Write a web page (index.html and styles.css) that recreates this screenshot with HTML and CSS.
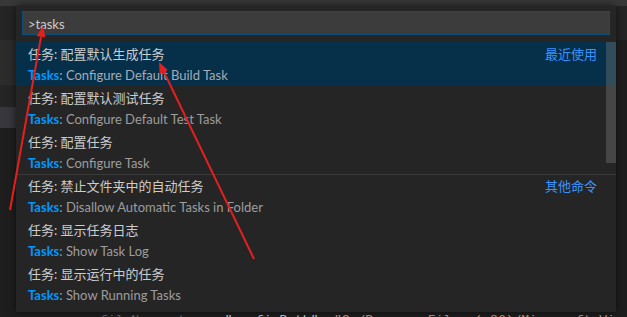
FILE: index.html
```html
<!DOCTYPE html>
<html lang="zh-CN">
<head>
<meta charset="utf-8">
<link rel="stylesheet" href="styles.css">
</head>
<body>
<div class="screen">
  <div class="topbar"></div>
  <div class="main">
    <div class="leftstrip">
      <div class="ls ls-a"></div>
      <div class="ls ls-b"></div>
      <div class="ls ls-c"></div>
      <div class="ls ls-d"></div>
    </div>
    <div class="panel">
      <div class="inputbox">&gt;tasks</div>
      <div class="list">
        <div class="row selected">
          <div class="line1"><span class="label">任务: 配置默认生成任务</span><span class="tag">最近使用</span></div>
          <div class="line2"><span class="hl">Tasks</span>: Configure Default Build Task</div>
        </div>
        <div class="row">
          <div class="line1"><span class="label">任务: 配置默认测试任务</span></div>
          <div class="line2"><span class="hl">Tasks</span>: Configure Default Test Task</div>
        </div>
        <div class="row">
          <div class="line1"><span class="label">任务: 配置任务</span></div>
          <div class="line2"><span class="hl">Tasks</span>: Configure Task</div>
        </div>
        <div class="row sep">
          <div class="line1"><span class="label">任务: 禁止文件夹中的自动任务</span><span class="tag">其他命令</span></div>
          <div class="line2"><span class="hl">Tasks</span>: Disallow Automatic Tasks in Folder</div>
        </div>
        <div class="row">
          <div class="line1"><span class="label">任务: 显示任务日志</span></div>
          <div class="line2"><span class="hl">Tasks</span>: Show Task Log</div>
        </div>
        <div class="row">
          <div class="line1"><span class="label">任务: 显示运行中的任务</span></div>
          <div class="line2"><span class="hl">Tasks</span>: Show Running Tasks</div>
        </div>
        <div class="scrollbar"></div>
      </div>
    </div>
    <div class="rightstrip"></div>
  </div>
  <div class="codeline"><span class="c-dim">fileName: true, </span><span class="c-key">"configPath"</span><span class="c-punc">: </span><span class="c-str">"C:/Program Files (x86)/Microsoft Vi</span></div>
  <svg class="arrows" width="627" height="317" viewBox="0 0 627 317">
    <line x1="10" y1="210" x2="41" y2="37" />
    <polygon points="43,26 45.5,37.6 36.6,36" />
    <line x1="254" y1="259" x2="164" y2="72" />
    <polygon points="159,62 167.9,69.9 159.7,73.9" />
  </svg>
</div>
</body>
</html>
```

FILE: styles.css
```css
html, body {
  margin: 0;
  padding: 0;
  background: #1e1e1e;
}
.screen {
  position: relative;
  width: 627px;
  height: 317px;
  overflow: hidden;
  background: #1e1e1e;
  font-family: Lato, "Noto Sans CJK SC", sans-serif;
  font-size: 13px;
}
.topbar {
  height: 6px;
  background: #383838;
}
.main {
  display: flex;
  height: 306px;
}
.leftstrip {
  width: 16px;
  display: flex;
  flex-direction: column;
}
.ls-a { height: 34px; background: #252526; }
.ls-b { height: 45px; background: #2c2c2d; }
.ls-c { height: 22px; background: #252526; }
.ls-d { height: 21px; background: #37373d; }
.panel {
  width: 600px;
  background: #252526;
  padding: 5px 0 6px 0;
  box-sizing: border-box;
  display: flex;
  flex-direction: column;
  box-shadow: 0 0 8px rgba(0,0,0,0.6);
  position: relative;
  z-index: 1;
}
.inputbox {
  margin: 0 6px 0 6px;
  height: 24px;
  box-sizing: border-box;
  background: #3c3c3c;
  border: 1px solid #0e4f7a;
  color: #cccccc;
  padding: 3px 0 0 5px;
  line-height: 19px;
  font-size: 13px;
}
.list {
  margin-top: 7px;
  position: relative;
  display: flex;
  flex-direction: column;
}
.row {
  height: 44px;
  box-sizing: border-box;
  padding: 0 19px 0 12px;
  display: flex;
  flex-direction: column;
}
.row.selected {
  background: #062f4a;
}
.row.sep {
  border-top: 1px solid #3a3a3a;
}
.line1 {
  height: 22px;
  display: flex;
  align-items: center;
  justify-content: space-between;
  color: #cccccc;
}
.line2 {
  height: 22px;
  display: flex;
  align-items: center;
  color: #9d9d9d;
  font-size: 13px;
  white-space: pre;
}
.selected .line2 {
  color: #a4acb4;
}
.hl {
  color: #0097fb;
  font-weight: bold;
}
.tag {
  color: #3794ff;
}
.scrollbar {
  position: absolute;
  right: 0;
  top: 0;
  width: 10px;
  height: 121px;
  background: rgba(121, 121, 121, 0.4);
}
.rightstrip {
  flex: 1;
  background: linear-gradient(#252526 0, #252526 34px, #1e1e1e 34px);
}
.codeline {
  position: absolute;
  left: 100px;
  top: 313px;
  height: 4px;
  overflow: hidden;
  font-family: "Liberation Mono", monospace;
  font-size: 13px;
  line-height: 16px;
  white-space: pre;
}
.c-dim { color: #6a6a6a; }
.c-key { color: #9cdcfe; }
.c-punc { color: #d4d4d4; }
.c-str { color: #ce9178; }
.arrows {
  position: absolute;
  left: 0;
  top: 0;
  z-index: 5;
  pointer-events: none;
}
.arrows line {
  stroke: #e3201e;
  stroke-width: 2;
}
.arrows polygon {
  fill: #e3201e;
}
```
